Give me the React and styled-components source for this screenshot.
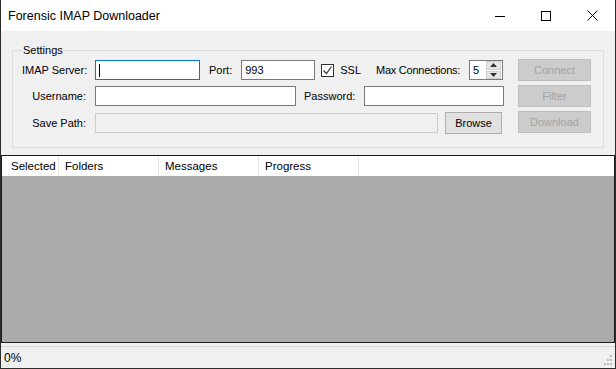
import React from 'react'
import styled, { createGlobalStyle } from 'styled-components'

const GlobalStyle = createGlobalStyle`
  html, body {
    margin: 0;
    padding: 0;
    background: #f0f0f0;
  }
  * {
    box-sizing: border-box;
  }
`

const Window = styled.div`
  width: 616px;
  height: 369px;
  display: flex;
  flex-direction: column;
  background: #f0f0f0;
  border: 1px solid #2d2d2d;
  border-top: none;
  font-family: 'Liberation Sans', Arial, sans-serif;
  font-size: 11px;
  color: #000;
  overflow: hidden;
`

const TitleBar = styled.div`
  height: 31px;
  flex: none;
  display: flex;
  align-items: center;
  background: #fff;
  padding-left: 7px;
`

const Title = styled.div`
  flex: 1;
  font-size: 12.5px;
  padding-top: 1px;
`

const CaptionButton = styled.div`
  width: 46px;
  height: 31px;
  display: flex;
  align-items: center;
  justify-content: center;
`

const Settings = styled.fieldset`
  min-width: 0;
  margin: 13px 11px 0 11px;
  padding: 4px 12px 14px 9px;
  border: 1px solid #dcdcdc;
  display: flex;
  justify-content: space-between;
`

const Legend = styled.legend`
  padding: 0 1px;
  margin-left: 0;
  font-size: 11px;
`

const Fields = styled.div`
  width: 482px;
  display: grid;
  grid-template-columns: 73px 1fr;
  row-gap: 6px;
  align-items: center;
`

const Label = styled.span`
  text-align: ${p => (p.$left ? 'left' : 'right')};
  padding-right: ${p => (p.$pr !== undefined ? p.$pr : 9)}px;
  margin-left: ${p => p.$ml || 0}px;
  letter-spacing: ${p => p.$ls || 0}px;
  white-space: nowrap;
`

const Row = styled.div`
  display: flex;
  align-items: center;
  height: 20px;
`

const TextBox = styled.div`
  width: ${p => p.$w}px;
  height: 20px;
  border: 1px solid ${p => (p.$focus ? '#0078d7' : p.$disabled ? '#cccccc' : '#7a7a7a')};
  background: ${p => (p.$disabled ? '#f0f0f0' : '#fff')};
  display: flex;
  align-items: center;
  padding-left: 3px;
  margin-left: ${p => p.$ml || 0}px;
  flex: none;
`

const Caret = styled.span`
  width: 1px;
  height: 13px;
  background: #000;
`

const CheckBox = styled.span`
  width: 13px;
  height: 13px;
  border: 1px solid #333;
  background: #fff;
  display: inline-flex;
  align-items: center;
  justify-content: center;
  margin-left: 6px;
  margin-right: 6px;
  flex: none;
`

const Numeric = styled.div`
  width: 34px;
  height: 20px;
  border: 1px solid #7a7a7a;
  background: #fff;
  display: flex;
  align-items: center;
  padding-left: 3px;
  margin-left: ${p => p.$ml || 0}px;
  flex: none;
`

const Spinner = styled.div`
  margin-left: auto;
  width: 16px;
  height: 18px;
  display: flex;
  flex-direction: column;
  gap: 1px;
  padding: 0 1px 0 0;
`

const SpinButton = styled.div`
  flex: 1;
  background: #e6e6e6;
  border: 1px solid #cfcfcf;
  display: flex;
  align-items: center;
  justify-content: center;
`

const Button = styled.div`
  width: ${p => p.$w || 73}px;
  height: 22px;
  flex: none;
  display: flex;
  align-items: center;
  justify-content: center;
  background: ${p => (p.$disabled ? '#cccccc' : '#e1e1e1')};
  border: 1px solid ${p => (p.$disabled ? '#bfbfbf' : '#adadad')};
  color: ${p => (p.$disabled ? '#a3a3a3' : '#000')};
  margin-left: ${p => p.$ml || 0}px;
`

const Buttons = styled.div`
  display: flex;
  flex-direction: column;
  gap: 4px;
  margin-top: -1px;
`

const ListView = styled.div`
  flex: 1;
  margin: 7px 0 0 0;
  border: 1px solid #1a1a1a;
  background: #ababab;
  display: flex;
  flex-direction: column;
`

const Header = styled.div`
  height: 20px;
  background: #fff;
  display: flex;
  padding-left: 1px;
`

const Column = styled.div`
  width: ${p => p.$w}px;
  display: flex;
  align-items: center;
  padding-left: ${p => p.$pl || 6}px;
  border-right: 1px solid #e5e5e5;
  font-size: 11.5px;
`

const StatusBar = styled.div`
  height: 22px;
  flex: none;
  border-top: 1px solid #d7d7d7;
  margin-top: 3px;
  display: flex;
  align-items: center;
  padding-left: 3px;
  position: relative;
  font-size: 12px;
`

const Grip = styled.svg`
  position: absolute;
  right: 2px;
  bottom: 2px;
`

export default function App() {
  return (
    <>
      <GlobalStyle />
      <Window>
        <TitleBar>
          <Title>Forensic IMAP Downloader</Title>
          <CaptionButton>
            <svg width="10" height="10" viewBox="0 0 10 10">
              <path d="M0 5.5h10" stroke="#000" strokeWidth="1" />
            </svg>
          </CaptionButton>
          <CaptionButton>
            <svg width="10" height="10" viewBox="0 0 10 10">
              <rect x="0.5" y="0.5" width="9" height="9" fill="none" stroke="#000" strokeWidth="1" />
            </svg>
          </CaptionButton>
          <CaptionButton>
            <svg width="11" height="11" viewBox="0 0 11 11">
              <path d="M0.5 0.5l10 10M10.5 0.5l-10 10" stroke="#000" strokeWidth="1" />
            </svg>
          </CaptionButton>
        </TitleBar>

        <Settings>
          <Legend>Settings</Legend>
          <Fields>
            <Label>IMAP Server:</Label>
            <Row>
              <TextBox $w={105} $focus>
                <Caret />
              </TextBox>
              <Label $ml={9} $left>Port:</Label>
              <TextBox $w={74}>993</TextBox>
              <CheckBox>
                <svg width="11" height="11" viewBox="0 0 11 11">
                  <path d="M1.5 5.5l3 3 5-7" fill="none" stroke="#333" strokeWidth="1.2" />
                </svg>
              </CheckBox>
              <span>SSL</span>
              <Label $ml={15} $ls={-0.25} $pr={0}>Max Connections:</Label>
              <Numeric $ml={9}>
                5
                <Spinner>
                  <SpinButton>
                    <svg width="7" height="4" viewBox="0 0 7 4">
                      <path d="M3.5 0L7 4H0z" fill="#333" />
                    </svg>
                  </SpinButton>
                  <SpinButton>
                    <svg width="7" height="4" viewBox="0 0 7 4">
                      <path d="M0 0h7L3.5 4z" fill="#333" />
                    </svg>
                  </SpinButton>
                </Spinner>
              </Numeric>
            </Row>

            <Label>Username:</Label>
            <Row>
              <TextBox $w={201} />
              <Label $ml={8} $left>Password:</Label>
              <TextBox $w={140} />
            </Row>

            <Label>Save Path:</Label>
            <Row>
              <TextBox $w={343} $disabled />
              <Button $w={57} $ml={7}>Browse</Button>
            </Row>
          </Fields>
          <Buttons>
            <Button $disabled>Connect</Button>
            <Button $disabled>Filter</Button>
            <Button $disabled>Download</Button>
          </Buttons>
        </Settings>

        <ListView>
          <Header>
            <Column $w={56} $pl={8}>Selected</Column>
            <Column $w={100}>Folders</Column>
            <Column $w={100}>Messages</Column>
            <Column $w={100}>Progress</Column>
          </Header>
        </ListView>

        <StatusBar>
          0%
          <Grip width="12" height="12" viewBox="0 0 12 12">
            <g fill="#bcbcbc">
              <rect x="9" y="1" width="2" height="2" />
              <rect x="6" y="5" width="2" height="2" />
              <rect x="9" y="5" width="2" height="2" />
              <rect x="3" y="9" width="2" height="2" />
              <rect x="6" y="9" width="2" height="2" />
              <rect x="9" y="9" width="2" height="2" />
            </g>
          </Grip>
        </StatusBar>
      </Window>
    </>
  )
}
